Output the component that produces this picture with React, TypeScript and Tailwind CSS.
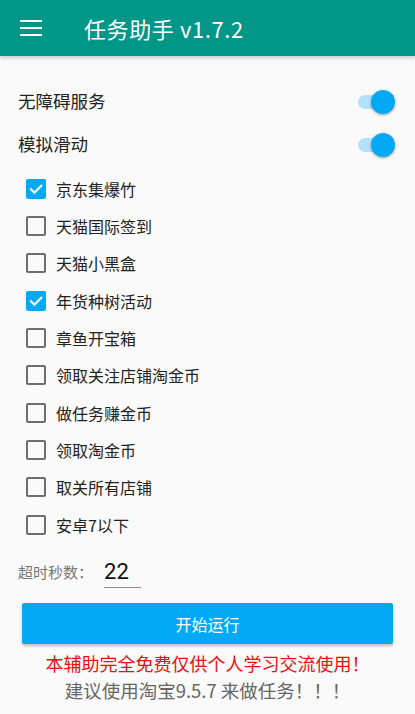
import React from "react";

const tasks: { label: string; checked: boolean }[] = [
    {label: "京东集爆竹", checked: true},
    {label: "天猫国际签到", checked: false},
    {label: "天猫小黑盒", checked: false},
    {label: "年货种树活动", checked: true},
    {label: "章鱼开宝箱", checked: false},
    {label: "领取关注店铺淘金币", checked: false},
    {label: "做任务赚金币", checked: false},
    {label: "领取淘金币", checked: false},
    {label: "取关所有店铺", checked: false},
    {label: "安卓7以下", checked: false},
];

const Toggle: React.FC<{ label: string }> = ({label}) => (
    <div className="flex items-center justify-between h-[43px] pl-[18px] pr-[20px]">
        <span className="text-[17.5px] text-[#222]">{label}</span>
        <div className="relative w-[37px] h-[24px] flex items-center">
            <div className="w-[30px] h-[14px] rounded-full bg-[#b3e1fb]"/>
            <div className="absolute right-0 top-0 w-[24px] h-[24px] rounded-full bg-[#03a9f4] shadow-[0_1px_3px_rgba(0,0,0,0.35)]"/>
        </div>
    </div>
);

const CheckRow: React.FC<{ label: string; checked: boolean }> = ({label, checked}) => (
    <div className="flex items-center h-[37.33px] pl-[26px]">
        {checked ? (
            <div className="w-[20px] h-[20px] rounded-[2px] bg-[#03a9f4] flex items-center justify-center">
                <svg width="16" height="16" viewBox="0 0 24 24" fill="none" stroke="white" strokeWidth="3.2"
                     strokeLinecap="square">
                    <path d="M4.5 12.5l5 5L20 7"/>
                </svg>
            </div>
        ) : (
            <div className="w-[20px] h-[20px] rounded-[2px] border-2 border-[#6e6e6e]"/>
        )}
        <span className="ml-[10px] text-[16px] text-[#222]">{label}</span>
    </div>
);

export default function App() {
    return (
        <div className="w-[415px] h-[714px] bg-[#fafafa] flex flex-col overflow-hidden"
             style={{fontFamily: '"Noto Sans CJK SC", Roboto, sans-serif'}}>
            <div className="h-[56px] bg-[#009688] flex items-center shadow-[0_2px_4px_rgba(0,0,0,0.2)] z-10 shrink-0">
                <div className="ml-[20px] w-[22px] flex flex-col gap-[4.5px]">
                    <div className="h-[2.5px] bg-white"/>
                    <div className="h-[2.5px] bg-white"/>
                    <div className="h-[2.5px] bg-white"/>
                </div>
                <span className="ml-[42px] text-white text-[22px] tracking-[0.6px]">任务助手 v1.7.2</span>
            </div>

            <div className="mt-[24px]">
                <Toggle label="无障碍服务"/>
                <Toggle label="模拟滑动"/>
            </div>

            <div className="mt-[4px]">
                {tasks.map((t) => (
                    <CheckRow key={t.label} label={t.label} checked={t.checked}/>
                ))}
            </div>

            <div className="flex items-end pl-[18px] mt-[13px] h-[32px]">
                <span className="text-[15px] text-[#777] mb-[5px]">超时秒数：</span>
                <div className="ml-[11px] w-[37px] border-b-[1.5px] border-[#8a8a8a] pb-[1px]">
                    <span className="text-[22px] text-[#111] leading-[28px]" style={{fontFamily: "Roboto, sans-serif"}}>22</span>
                </div>
            </div>

            <div className="px-[22px] mt-[15px]">
                <button className="w-full h-[41px] bg-[#03a9f4] rounded-[2px] text-white text-[16px] shadow-[0_2px_3px_rgba(0,0,0,0.25)]">
                    开始运行
                </button>
            </div>

            <div className="mt-[8px] text-center text-[18px] text-[#e8100f] leading-[22px]">
                本辅助完全免费仅供个人学习交流使用！
            </div>
            <div className="mt-[4px] text-center text-[18.5px] text-[#666] leading-[24px]">
                建议使用淘宝9.5.7 来做任务！！！
            </div>
        </div>
    );
}
